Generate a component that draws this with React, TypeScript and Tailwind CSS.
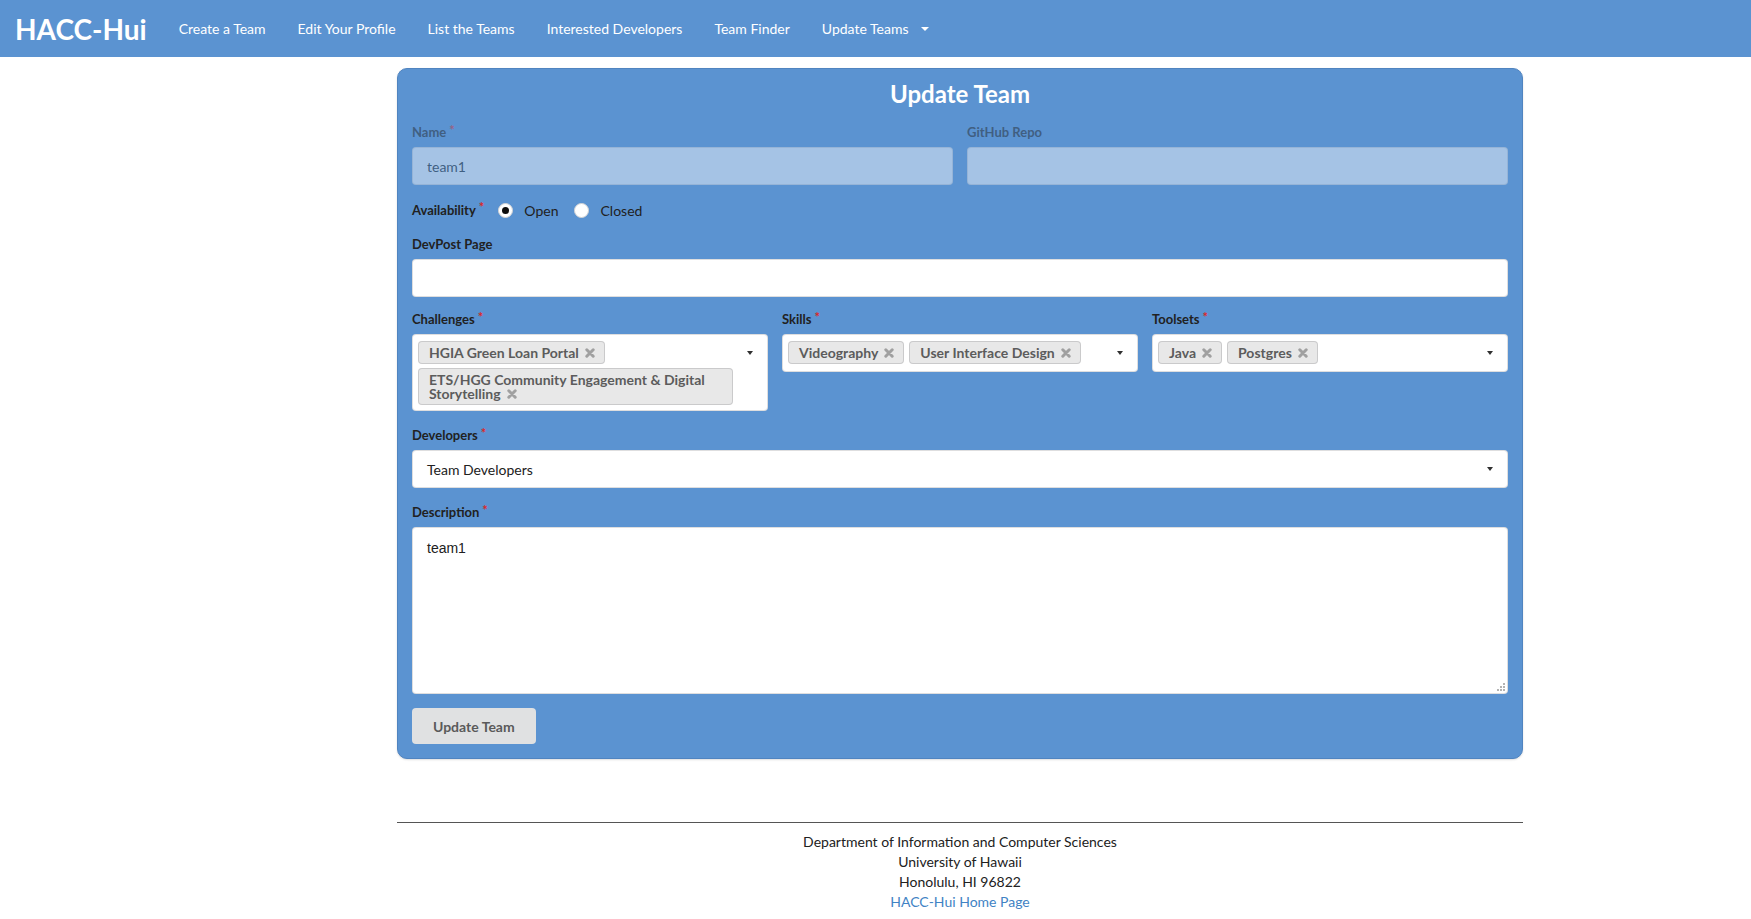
import React from 'react';

const navItems = ['Create a Team', 'Edit Your Profile', 'List the Teams', 'Interested Developers', 'Team Finder'];

function Caret({ light }: { light?: boolean }) {
  return (
    <span
      className={
        light
          ? 'inline-block h-0 w-0 border-x-[4px] border-t-[4px] border-x-transparent border-t-white'
          : 'inline-block h-0 w-0 border-x-[3.5px] border-t-[4px] border-x-transparent border-t-[#303030]'
      }
    />
  );
}

function Req() {
  return <span className="ml-[3px] inline-block align-top text-[13px] leading-[13px] text-[#db2828]">*</span>;
}

function Label({ children, required }: { children: React.ReactNode; required?: boolean }) {
  return (
    <label className="mb-[6px] block text-[13px] font-bold leading-[17px] text-[#212121]">
      {children}
      {required && <Req />}
    </label>
  );
}

function DeleteX() {
  return (
    <svg viewBox="0 0 10 10" className="ml-[6px] inline-block h-[10px] w-[10px] align-[-0.5px]">
      <path d="M1.8 1.8 L8.2 8.2 M8.2 1.8 L1.8 8.2" stroke="#a0a0a0" strokeWidth="3" strokeLinecap="round" />
    </svg>
  );
}

function Chip({ text }: { text: string }) {
  return (
    <div className="rounded-[4px] bg-[#e8e8e8] py-[4.5px] pl-[11px] pr-[10px] text-[14px] font-bold leading-[14px] text-[#5c5c5c] shadow-[inset_0_0_0_1px_rgba(34,36,38,0.15)]">
      {text}
      <DeleteX />
    </div>
  );
}

function MultiSelect({ label, chips }: { label: string; chips: string[] }) {
  return (
    <div>
      <Label required>{label}</Label>
      <div className="flex min-h-[38px] rounded-[4px] border border-[rgba(34,36,38,0.15)] bg-white pl-[5px]">
        <div className="flex min-w-0 flex-1 flex-wrap items-start gap-x-[5px] gap-y-[4px] pb-[5px] pt-[6px]">
          {chips.map((c) => (
            <Chip key={c} text={c} />
          ))}
        </div>
        <div className="flex h-[36px] w-[34px] items-center pl-[14px]">
          <Caret />
        </div>
      </div>
    </div>
  );
}

function Radio({ label, checked }: { label: string; checked?: boolean }) {
  return (
    <div className="mr-[16px] flex items-center">
      <span className="flex h-[15px] w-[15px] items-center justify-center rounded-full border border-[#d4d4d5] bg-white">
        {checked && <span className="h-[7px] w-[7px] rounded-full bg-[#0d0d0d]" />}
      </span>
      <span className="ml-[11px] text-[14px] text-[#212121]">{label}</span>
    </div>
  );
}

function NavBar() {
  return (
    <nav className="flex h-[57px] items-center bg-[#5b93d1] pl-[15px] text-white">
      <span className="pr-[16px] text-[28px] font-bold leading-none">HACC-Hui</span>
      {navItems.map((item) => (
        <a key={item} className="px-[16px] text-[14px]">
          {item}
        </a>
      ))}
      <a className="flex items-center px-[16px] text-[14px]">
        Update Teams
        <span className="ml-[12px] flex">
          <Caret light />
        </span>
      </a>
    </nav>
  );
}

function UpdateTeamForm() {
  return (
    <div className="rounded-[10px] border border-[#5084c0] bg-[#5b93d1] px-[14px] pb-[14px] pt-[10px] shadow-[0_1px_2px_rgba(34,36,38,0.15)]">
      <h2 className="text-center text-[24px] font-bold leading-[30px] text-white">Update Team</h2>

      {/* disabled fields */}
      <div className="mt-[15px] grid grid-cols-2 gap-[14px] opacity-45">
        <div>
          <Label required>Name</Label>
          <input
            readOnly
            defaultValue="team1"
            className="h-[38px] w-full rounded-[4px] border border-[rgba(34,36,38,0.15)] bg-white px-[14px] text-[14px] text-[#212121] outline-none"
          />
        </div>
        <div>
          <Label>GitHub Repo</Label>
          <input
            readOnly
            className="h-[38px] w-full rounded-[4px] border border-[rgba(34,36,38,0.15)] bg-white px-[14px] text-[14px] outline-none"
          />
        </div>
      </div>

      <div className="mt-[14px] flex h-[23px] items-center">
        <span className="mr-[14px] text-[13px] font-bold text-[#212121]">
          Availability
          <Req />
        </span>
        <Radio label="Open" checked />
        <Radio label="Closed" />
      </div>

      <div className="mt-[14px]">
        <Label>DevPost Page</Label>
        <input
          readOnly
          className="h-[38px] w-full rounded-[4px] border border-[rgba(34,36,38,0.15)] bg-white px-[14px] text-[14px] outline-none"
        />
      </div>

      <div className="mt-[14px] grid grid-cols-3 items-start gap-[14px]">
        <MultiSelect label="Challenges" chips={['HGIA Green Loan Portal', 'ETS/HGG Community Engagement & Digital Storytelling']} />
        <MultiSelect label="Skills" chips={['Videography', 'User Interface Design']} />
        <MultiSelect label="Toolsets" chips={['Java', 'Postgres']} />
      </div>

      <div className="mt-[16px]">
        <Label required>Developers</Label>
        <div className="flex h-[38px] items-center justify-between rounded-[4px] border border-[rgba(34,36,38,0.15)] bg-white px-[14px] text-[14px] text-[#212121]">
          <span>Team Developers</span>
          <Caret />
        </div>
      </div>

      <div className="mt-[16px]">
        <Label required>Description</Label>
        <div className="relative">
          <textarea
            readOnly
            defaultValue="team1"
            className="block h-[167px] w-full resize-none rounded-[4px] border border-[rgba(34,36,38,0.15)] bg-white px-[14px] py-[11px] font-['Liberation_Sans',Arial,sans-serif] text-[14px] leading-[18px] text-[#212121] outline-none"
          />
          {/* resize grip */}
          <svg viewBox="0 0 8 8" className="absolute bottom-[3px] right-[3px] h-[8px] w-[8px]">
            <g fill="#b3b3b3">
              <rect x="6" y="0" width="2" height="2" />
              <rect x="3" y="3" width="2" height="2" />
              <rect x="6" y="3" width="2" height="2" />
              <rect x="0" y="6" width="2" height="2" />
              <rect x="3" y="6" width="2" height="2" />
              <rect x="6" y="6" width="2" height="2" />
            </g>
          </svg>
        </div>
      </div>

      <button className="mt-[14px] h-[36px] rounded-[4px] bg-[#e0e1e2] px-[21px] text-[14px] font-bold text-[#5a5a5a]">
        Update Team
      </button>
    </div>
  );
}

function Footer() {
  return (
    <footer className="mt-[63px] border-t border-[#555] pt-[9px] text-center text-[14px] leading-[20px] text-[#212121]">
      <div>Department of Information and Computer Sciences</div>
      <div>University of Hawaii</div>
      <div>Honolulu, HI 96822</div>
      <a className="text-[#4183c4]">HACC-Hui Home Page</a>
    </footer>
  );
}

export default function App() {
  return (
    <div className="min-h-screen bg-white font-[Lato,sans-serif] text-[14px] text-[#212121]">
      <NavBar />
      <main className="ml-[397px] w-[1126px] pb-[10px] pt-[11px]">
        <UpdateTeamForm />
        <Footer />
      </main>
    </div>
  );
}
